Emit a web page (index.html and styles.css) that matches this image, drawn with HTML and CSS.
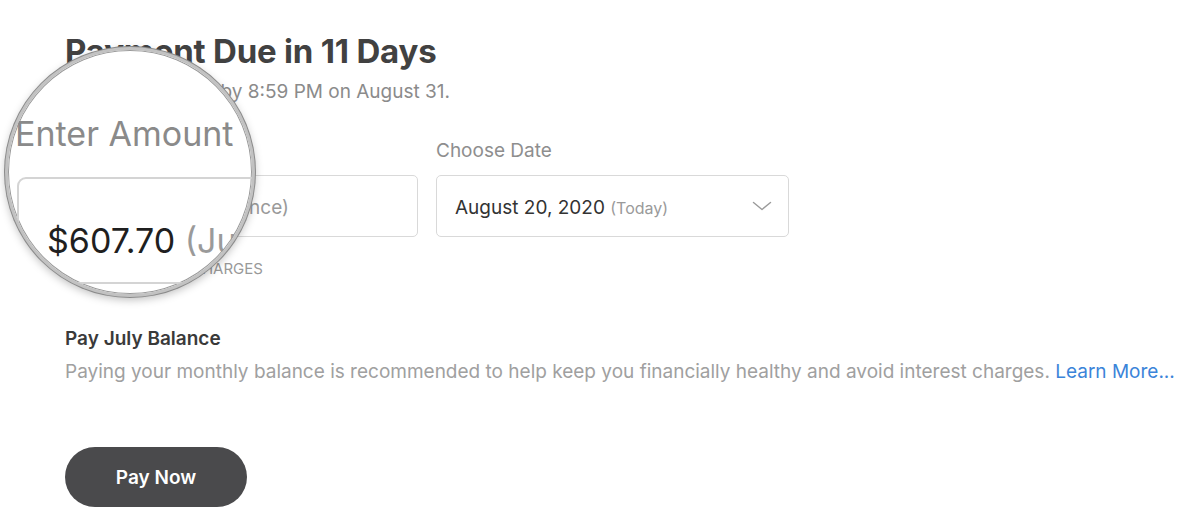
FILE: index.html
```html
<!DOCTYPE html>
<html lang="en">
<head>
<meta charset="utf-8">
<title>Payment</title>
<link rel="stylesheet" href="styles.css">
</head>
<body>
<main class="page">
  <h1 class="title">Payment Due in 11 Days</h1>
  <p class="subtitle"><span class="lead">Pay your balance</span> by 8:59 PM on August 31.</p>

  <div class="fields">
    <div class="field">
      <div class="label">Enter Amount</div>
      <div class="box"><span class="value">$607.70</span>&nbsp;<span class="muted">(July Balance)</span></div>
      <div class="hint">Avoid interest charges</div>
    </div>
    <div class="field">
      <div class="label">Choose Date</div>
      <div class="box select">
        <span class="value">August 20, 2020</span>&nbsp;<span class="muted small">(Today)</span>
        <svg class="chevron" width="20" height="10" viewBox="0 0 20 10"><path d="M1.5 1.5 L10 8.5 L18.5 1.5" fill="none" stroke="#9a9a9a" stroke-width="1.4" stroke-linecap="round" stroke-linejoin="round"/></svg>
      </div>
    </div>
  </div>

  <section class="balance">
    <h2 class="balance-title">Pay July Balance</h2>
    <p class="balance-text">Paying your monthly balance is recommended to help keep you financially healthy and avoid interest charges. <a class="link" href="#">Learn More...</a></p>
  </section>

  <button class="pay">Pay Now</button>

  <div class="magnifier">
    <div class="mag-content">
      <div class="mag-label">Enter Amount</div>
      <div class="mag-box"><span class="mag-value">$607.70</span> <span class="mag-muted">(July Balance)</span></div>
    </div>
  </div>
</main>
</body>
</html>
```

FILE: styles.css
```css
* { box-sizing: border-box; }
html, body { margin: 0; padding: 0; background: #fff; }
body {
  font-family: Inter, "Noto Sans", "Liberation Sans", sans-serif;
  color: #333;
}
.page {
  position: relative;
  padding: 31px 0 0 65px;
  height: 522px;
  overflow: hidden;
}
.title {
  margin: 0;
  font-size: 33px;
  line-height: 40px;
  font-weight: 700;
  color: #414141;
  letter-spacing: -0.2px;
}
.subtitle {
  margin: 9px 0 0;
  font-size: 19px;
  line-height: 24px;
  color: #8b8b8b;
}
.lead { letter-spacing: -0.3px; }
.fields {
  display: flex;
  align-items: flex-start;
  gap: 18px;
  margin-top: 35px;
}
.field { width: 353px; }
.label {
  font-size: 19px;
  line-height: 24px;
  color: #8e8e8e;
  margin-bottom: 12px;
}
.box {
  height: 62px;
  border: 1px solid #d9d9d9;
  border-radius: 5px;
  display: flex;
  align-items: center;
  padding: 3px 18px 0;
  font-size: 19px;
  color: #333;
  white-space: nowrap;
}
.muted { color: #9a9a9a; }
.small { font-size: 16px; }
.chevron { margin-left: auto; margin-right: -2px; margin-top: -3px; }
.hint {
  margin-top: 23px;
  font-size: 15px;
  line-height: 18px;
  text-transform: uppercase;
  color: #999;
}
.balance { margin-top: 49px; }
.balance-title {
  margin: 0;
  font-size: 19px;
  line-height: 24px;
  font-weight: 600;
  color: #3a3a3a;
}
.balance-text {
  margin: 9px 0 0;
  font-size: 19px;
  line-height: 24px;
  color: #a0a0a0;
  white-space: nowrap;
}
.link { color: #3b84d9; text-decoration: none; }
.pay {
  display: block;
  margin-top: 63px;
  width: 182px;
  height: 60px;
  border: 0;
  border-radius: 30px;
  background: #4a4a4c;
  color: #fff;
  font-family: inherit;
  font-size: 19px;
  font-weight: 600;
}
.magnifier {
  position: absolute;
  left: 5px;
  top: 47px;
  width: 250px;
  height: 250px;
  border-radius: 50%;
  background: #fff;
  border: 3px solid #c2c2c2;
  box-shadow: 0 0 0 1px #8a8a8a, 0 3px 8px rgba(0,0,0,0.25), inset 0 0 0 1px #9a9a9a;
  overflow: hidden;
}
.mag-content {
  padding: 64px 0 0 7px;
  width: 600px;
}
.mag-label {
  font-size: 34px;
  line-height: 40px;
  color: #8a8a8a;
}
.mag-box {
  margin: 23px 0 0 2px;
  height: 107px;
  border: 2px solid #d4d4d4;
  border-radius: 9px;
  padding: 42px 0 0 28px;
  font-size: 34px;
  line-height: 40px;
  white-space: nowrap;
}
.mag-value { color: #1f1f1f; }
.mag-muted { color: #9a9a9a; }
```
